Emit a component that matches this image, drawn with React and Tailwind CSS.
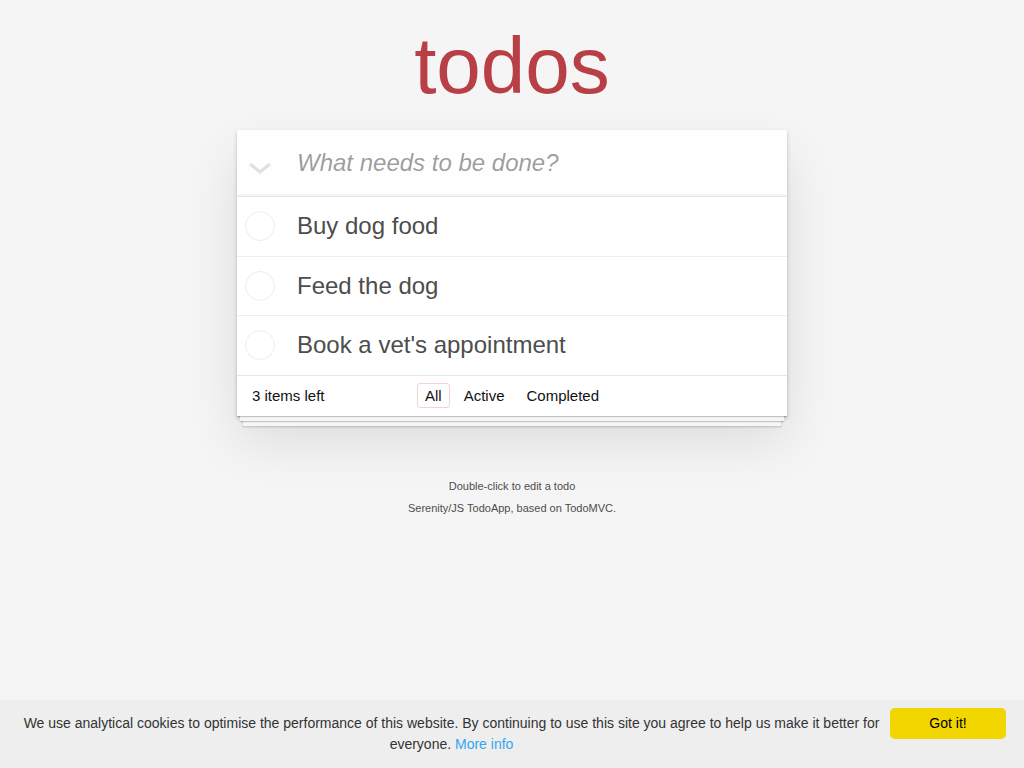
import React from "react";

const todos = ["Buy dog food", "Feed the dog", "Book a vet's appointment"];

export default function App() {
  return (
    <div className="min-h-screen bg-[#f5f5f5] font-['Liberation_Sans',Arial,sans-serif] text-[14px] text-[#111]">
      <div className="w-[550px] mx-auto pt-[26px]">
        <h1 className="h-[80px] text-center text-[80px] leading-none font-extralight text-[#b83f45]">todos</h1>
        <section className="mt-[24px] bg-white shadow-[0_2px_4px_0_rgba(0,0,0,0.2),0_25px_50px_0_rgba(0,0,0,0.1)]">
          <header className="h-[66px] flex items-center bg-black/[0.003] shadow-[inset_0_-2px_1px_rgba(0,0,0,0.03)]">
            <svg className="ml-[11px] mt-[10px] shrink-0" width="24" height="13" viewBox="0 0 24 13">
              <path d="M2 2 L12 10 L22 2" fill="none" stroke="#e0e0e0" strokeWidth="3.2" strokeLinejoin="miter" />
            </svg>
            <input
              className="ml-[25px] flex-1 bg-transparent outline-none text-[24px] leading-[1.4] text-[#4d4d4d] placeholder:italic placeholder:text-black/40"
              placeholder="What needs to be done?"
            />
          </header>
          <ul className="border-t border-[#e6e6e6]">
            {todos.map((t, i) => (
              <li
                key={t}
                className={`flex items-center ${i < todos.length - 1 ? "border-b border-[#ededed]" : ""}`}
              >
                <div className="ml-[8px] w-[30px] h-[30px] rounded-full border border-[#ededed] shrink-0" />
                <label className="ml-[22px] py-[15px] text-[24px] leading-[28.6px] text-[#4d4d4d]">{t}</label>
              </li>
            ))}
          </ul>
          <footer className="relative h-[41px] border-t border-[#e6e6e6] px-[15px] grid grid-cols-[1fr_auto_1fr] items-center text-[15px] shadow-[0_1px_1px_rgba(0,0,0,0.2),0_8px_0_-3px_#f6f6f6,0_9px_1px_-3px_rgba(0,0,0,0.2),0_16px_0_-6px_#f6f6f6,0_17px_2px_-6px_rgba(0,0,0,0.2)]">
            <span className="text-left leading-[20px]">3 items left</span>
            <ul className="flex">
              <li>
                <a className="block m-[3px] px-[7px] py-[3px] border border-[rgba(175,47,47,0.2)] rounded-[3px] leading-[17px]">All</a>
              </li>
              <li>
                <a className="block m-[3px] px-[7px] py-[3px] border border-transparent rounded-[3px] leading-[17px]">Active</a>
              </li>
              <li>
                <a className="block m-[3px] px-[7px] py-[3px] border border-transparent rounded-[3px] leading-[17px]">Completed</a>
              </li>
            </ul>
            <span />
          </footer>
        </section>
        <div className="mt-[65px] text-center text-[11px] leading-none text-[#4d4d4d]">
          <p>Double-click to edit a todo</p>
          <p className="mt-[11px]">Serenity/JS TodoApp, based on TodoMVC.</p>
        </div>
      </div>
      <div className="fixed bottom-0 left-0 right-0 h-[68px] bg-[#eeeeee] flex items-start pt-[8px] pr-[18px] pl-[14px]">
        <p className="flex-1 pt-[5px] text-center text-[14px] leading-[21px] text-[#333]">
          We use analytical cookies to optimise the performance of this website. By continuing to use this site you agree to help us make it better for everyone. <a className="text-[#31a8f0]">More info</a>
        </p>
        <button className="ml-[1px] w-[116px] h-[31px] rounded-[5px] bg-[#f1d600] text-[14px] text-black">Got it!</button>
      </div>
    </div>
  );
}
